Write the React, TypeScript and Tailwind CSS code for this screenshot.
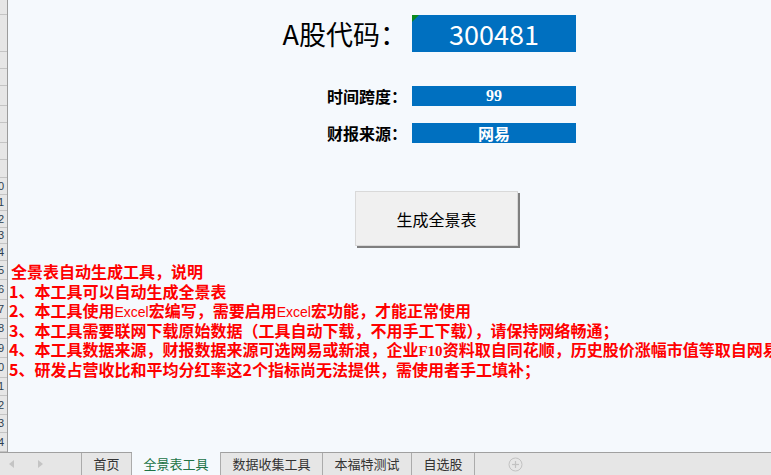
// Excel-like sheet: 全景表工具 sheet with inputs, a button and red notes

const CJK = { fontFamily: '"Noto Sans CJK SC", "Noto Sans", sans-serif' }

// row header heights, row 1..24 (sum = 452)
const rowHeights = [
  15, 37, 17, 17, 20, 17, 20, 17, 18,
  17, 16, 17, 16, 17,
  19, 20, 19, 20, 19, 20,
  18, 19, 18, 19,
]

const excel = (
  <span className="text-[14px] font-normal" style={{ fontFamily: '"Liberation Sans", sans-serif' }}>
    Excel
  </span>
)

const notes: React.ReactNode[] = [
  '1、本工具可以自动生成全景表',
  <>2、本工具使用{excel}宏编写，需要启用{excel}宏功能，才能正常使用</>,
  '3、本工具需要联网下载原始数据（工具自动下载，不用手工下载），请保持网络畅通；',
  <>
    4、本工具数据来源，财报数据来源可选网易或新浪，企业
    <span className="text-[15px]" style={{ fontFamily: '"Liberation Serif", serif' }}>F10</span>
    资料取自同花顺，历史股价涨幅市值等取自网易
  </>,
  '5、研发占营收比和平均分红率这2个指标尚无法提供，需使用者手工填补；',
]

const tabs = ['首页', '全景表工具', '数据收集工具', '本福特测试', '自选股']

function RowHeader() {
  return (
    <div className="flex w-[8px] shrink-0 flex-col border-r border-[#9c9c9c] bg-[#e6e6e6]">
      {rowHeights.map((h, i) => (
        <div
          key={i}
          className="flex shrink-0 items-center justify-end overflow-hidden border-b border-[#c4c4c4] pr-[3px] text-[11px] text-[#2d3e50]"
          style={{ height: h, fontFamily: '"Liberation Sans", sans-serif' }}
        >
          {i >= 9 && <span>{(i + 1) % 10}</span>}
        </div>
      ))}
    </div>
  )
}

function BlueBox({ children, className }: { children: React.ReactNode; className?: string }) {
  return (
    <div className={`flex w-[164px] items-center justify-center bg-[#0070c0] text-white ${className ?? ''}`}>
      {children}
    </div>
  )
}

function Sheet() {
  return (
    <div className="flex min-w-0 flex-1 flex-col overflow-hidden bg-[#f5f9fd]">
      <div className="h-[15px] shrink-0" />

      <div className="flex h-[37px] shrink-0 items-center">
        <div className="w-[399px] text-right text-[27px] leading-none text-black" style={CJK}>
          A股代码：
        </div>
        <BlueBox className="relative ml-[5px] h-[37px]">
          <span className="text-[27px] leading-none" style={CJK}>300481</span>
          <svg className="absolute left-0 top-0" width="7" height="7" viewBox="0 0 7 7">
            <polygon points="0,0 7,0 0,7" fill="#0b8a1e" />
          </svg>
        </BlueBox>
      </div>

      <div className="h-[34px] shrink-0" />

      <div className="flex h-[20px] shrink-0 items-center">
        <div className="w-[399px] text-right text-[16px] font-bold leading-none text-black" style={CJK}>
          时间跨度：
        </div>
        <BlueBox className="ml-[5px] h-[20px]">
          <span className="text-[16px] font-bold leading-none" style={{ fontFamily: '"Liberation Serif", serif' }}>
            99
          </span>
        </BlueBox>
      </div>

      <div className="h-[17px] shrink-0" />

      <div className="flex h-[20px] shrink-0 items-center">
        <div className="w-[399px] text-right text-[16px] font-bold leading-none text-black" style={CJK}>
          财报来源：
        </div>
        <BlueBox className="ml-[5px] h-[20px]">
          <span className="text-[16px] font-bold leading-none" style={CJK}>网易</span>
        </BlueBox>
      </div>

      <div className="h-[48px] shrink-0" />

      <div className="flex shrink-0">
        <button
          className="ml-[347px] flex h-[55px] w-[163px] items-center justify-center border border-[#d9d9d9] bg-[#f0f0f0] text-[16px] text-black shadow-[2px_2px_0_#7f7f7f]"
          style={CJK}
        >
          生成全景表
        </button>
      </div>

      <div className="h-[16px] shrink-0" />

      <div className="flex flex-col whitespace-nowrap pl-[3px] text-[16px] font-bold text-[#ff0000]" style={CJK}>
        <div className="h-[19.5px] leading-[19.5px]">全景表自动生成工具，说明</div>
        {notes.map((n, i) => (
          <div key={i} className="ml-[-2px] h-[19.5px] leading-[19.5px]">
            {n}
          </div>
        ))}
      </div>
    </div>
  )
}

function TabBar() {
  return (
    <div className="flex h-[23px] shrink-0 items-stretch border-t border-[#a0a0a0] bg-[#e6e6e6]">
      <div className="flex w-[82px] items-center border-r border-[#ababab]">
        <svg className="ml-[9px]" width="5" height="8" viewBox="0 0 5 8">
          <polygon points="5,0 0,4 5,8" fill="#c4c4c4" />
        </svg>
        <svg className="ml-[24px]" width="5" height="8" viewBox="0 0 5 8">
          <polygon points="0,0 5,4 0,8" fill="#c4c4c4" />
        </svg>
      </div>
      {tabs.map((t, i) => {
        const active = i === 1
        return (
          <div
            key={t}
            className={`flex items-center border-r border-[#ababab] px-[11.5px] text-[13px] ${
              active ? 'mt-[-1px] bg-[#f5f9fd] text-[#217346]' : 'text-[#333333]'
            }`}
            style={CJK}
          >
            {t}
          </div>
        )
      })}
      <div className="ml-[33px] flex items-center">
        <svg width="15" height="15" viewBox="0 0 15 15">
          <circle cx="7.5" cy="7.5" r="6.5" fill="none" stroke="#c2c2c2" strokeWidth="1" />
          <line x1="7.5" y1="4" x2="7.5" y2="11" stroke="#c2c2c2" strokeWidth="1.2" />
          <line x1="4" y1="7.5" x2="11" y2="7.5" stroke="#c2c2c2" strokeWidth="1.2" />
        </svg>
      </div>
    </div>
  )
}

export default function App() {
  return (
    <div className="flex h-[475px] w-[771px] flex-col overflow-hidden bg-[#f5f9fd]">
      <div className="flex h-[452px] shrink-0">
        <RowHeader />
        <Sheet />
      </div>
      <TabBar />
    </div>
  )
}
